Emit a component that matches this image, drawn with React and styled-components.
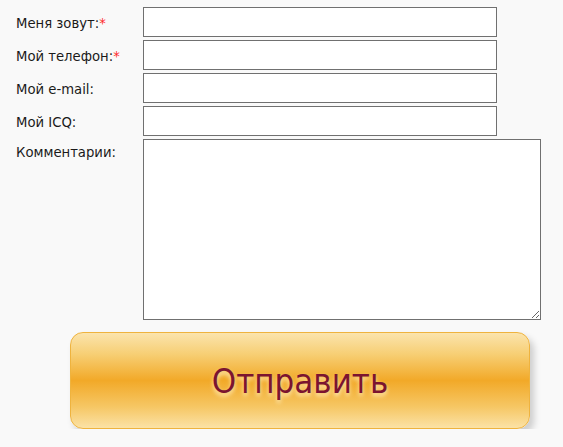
import React from 'react';
import styled, { createGlobalStyle } from 'styled-components';

const GlobalStyle = createGlobalStyle`
  html, body {
    margin: 0;
    padding: 0;
    background: #f9f9f9;
  }
  body {
    font-family: "DejaVu Sans Condensed", "DejaVu Sans", Verdana, sans-serif;
  }
`;

const Form = styled.form`
  display: flex;
  flex-direction: column;
  padding: 7px 0 0 16px;
`;

const Fields = styled.div`
  display: grid;
  grid-template-columns: 127px auto;
  row-gap: 3px;
  align-items: center;
`;

const Label = styled.label`
  font-size: 14.7px;
  color: #1a1a1a;
  align-self: ${({ $top }) => ($top ? 'start' : 'center')};
  padding-top: ${({ $top }) => ($top ? '4px' : '0')};
`;

const Required = styled.span`
  color: #ff2a2a;
`;

const Input = styled.input`
  box-sizing: border-box;
  width: 354px;
  height: 30px;
  margin: 0;
  border: 1px solid #707070;
  border-radius: 0;
  background: #fff;
  font: inherit;
  padding: 2px 4px;
`;

const TextArea = styled.textarea`
  box-sizing: border-box;
  width: 398px;
  height: 181px;
  margin: 0;
  border: 1px solid #707070;
  border-radius: 0;
  background: #fff;
  font: inherit;
  display: block;
`;

const Submit = styled.button`
  box-sizing: border-box;
  width: 460px;
  height: 97px;
  margin: 12px 0 0 54px;
  border: 1px solid #efb33e;
  border-radius: 13px;
  background: linear-gradient(
    to bottom,
    #fbe4ad 0%,
    #f7cf75 22%,
    #f2a928 50%,
    #f6c765 78%,
    #fbe2a6 100%
  );
  box-shadow: 4px 5px 7px rgba(0, 0, 0, 0.18);
  color: #7b1430;
  font-family: "DejaVu Sans Condensed", "DejaVu Sans", Verdana, sans-serif;
  font-size: 34.5px;
  text-shadow: 0 3px 4px rgba(255, 242, 200, 0.9);
  cursor: pointer;
  padding: 0;
`;

const fields = [
  { id: 'name', label: 'Меня зовут:', required: true },
  { id: 'phone', label: 'Мой телефон:', required: true },
  { id: 'email', label: 'Мой e-mail:' },
  { id: 'icq', label: 'Мой ICQ:' },
];

const App = () => {
  return (
    <>
      <GlobalStyle />
      <Form onSubmit={(e) => e.preventDefault()}>
        <Fields>
          {fields.map((f) => (
            <React.Fragment key={f.id}>
              <Label htmlFor={f.id}>
                {f.label}
                {f.required && <Required>*</Required>}
              </Label>
              <Input id={f.id} type="text" />
            </React.Fragment>
          ))}
          <Label htmlFor="comment" $top>
            Комментарии:
          </Label>
          <TextArea id="comment" />
        </Fields>
        <div>
          <Submit type="submit">Отправить</Submit>
        </div>
      </Form>
    </>
  );
};

export default App;
